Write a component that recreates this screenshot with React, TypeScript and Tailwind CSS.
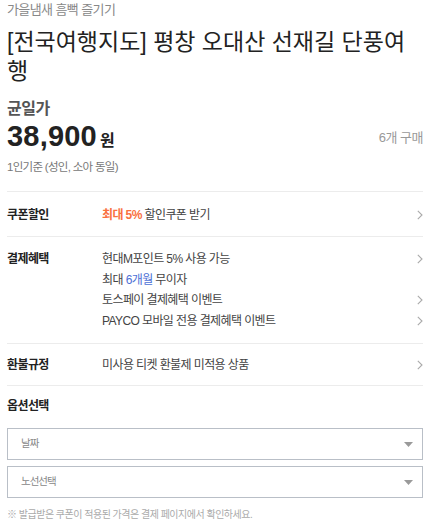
import React from "react";

const font = { fontFamily: '"Liberation Sans", "Noto Sans CJK KR", sans-serif' };

function Chevron() {
  return (
    <svg width="6" height="10" viewBox="0 0 6 10" className="shrink-0">
      <path d="M0.8 0.8 L5 5 L0.8 9.2" fill="none" stroke="#aaaaaa" strokeWidth="1.1" />
    </svg>
  );
}

function Caret() {
  return (
    <svg width="9" height="5" viewBox="0 0 9 5">
      <path d="M0 0 H9 L4.5 5 Z" fill="#9a9a9a" />
    </svg>
  );
}

function Select({ label }: { label: string }) {
  return (
    <div className="flex h-[32px] items-center justify-between border border-[#b9bfc7] pl-[13px] pr-[9px]">
      <span className="text-[10.5px] tracking-[-1px] text-[#888]">{label}</span>
      <Caret />
    </div>
  );
}

export default function App() {
  return (
    <div style={font} className="w-[437px] bg-white pl-[7px] pr-[14px] text-[#222]">
      <div className="pt-[1px] text-[13px] leading-[18px] tracking-[-0.6px] text-[#888]">가을냄새 흠뻑 즐기기</div>
      <h1 className="mt-[9px] text-[23px] leading-[29px] text-[#222]">
        [전국여행지도] 평창 오대산 선재길 단풍여행
      </h1>
      <div className="mt-[12px] text-[16px] font-bold leading-[22px] tracking-[-0.5px] text-[#555]">균일가</div>
      <div className="flex items-center justify-between">
        <div className="flex items-baseline leading-[32px]">
          <span className="text-[29px] font-bold tracking-[0.2px] text-[#222]">38,900</span>
          <span className="ml-[3px] text-[16px] font-bold text-[#222]">원</span>
        </div>
        <span className="mt-[-2px] text-[13px] tracking-[-0.5px] text-[#999]">6개 구매</span>
      </div>
      <div className="mt-[1px] text-[11.5px] leading-[18px] tracking-[-0.7px] text-[#777]">1인기준 (성인, 소아 동일)</div>

      <div className="mt-[15px] border-t border-[#ececec]" />

      <div className="flex items-center pt-[14px] pb-[12px] text-[12px] leading-[18px] tracking-[-0.6px]">
        <div className="w-[95px] font-bold text-[#222]">쿠폰할인</div>
        <div className="flex-1 text-[#444]">
          <span className="font-bold text-[#f9703e]">최대 5%</span> 할인쿠폰 받기
        </div>
        <Chevron />
      </div>

      <div className="border-t border-[#ececec]" />

      <div className="flex pt-[12px] pb-[12px] text-[12px] leading-[20.5px] tracking-[-0.6px]">
        <div className="w-[95px] font-bold text-[#222]">결제혜택</div>
        <div className="flex flex-1 flex-col text-[#444]">
          <div className="flex items-center justify-between">
            <span>현대M포인트 5% 사용 가능</span>
            <Chevron />
          </div>
          <div>
            최대 <span className="text-[#4d6fd6]">6개월</span> 무이자
          </div>
          <div className="flex items-center justify-between">
            <span>토스페이 결제혜택 이벤트</span>
            <Chevron />
          </div>
          <div className="flex items-center justify-between">
            <span>PAYCO 모바일 전용 결제혜택 이벤트</span>
            <Chevron />
          </div>
        </div>
      </div>

      <div className="border-t border-[#ececec]" />

      <div className="flex items-center pt-[12px] pb-[11px] text-[12px] leading-[18px] tracking-[-0.6px]">
        <div className="w-[95px] font-bold text-[#222]">환불규정</div>
        <div className="flex-1 text-[#444]">미사용 티켓 환불제 미적용 상품</div>
        <Chevron />
      </div>

      <div className="border-t border-[#ececec]" />

      <div className="pt-[11px] text-[12px] font-bold leading-[18px] tracking-[-0.6px] text-[#222]">옵션선택</div>

      <div className="mt-[13px] flex flex-col gap-[6px]">
        <Select label="날짜" />
        <Select label="노선선택" />
      </div>

      <div className="mt-[9px] pb-[10px] text-[10px] leading-[16px] tracking-[-0.5px] text-[#aaa]">
        ※ 발급받은 쿠폰이 적용된 가격은 결제 페이지에서 확인하세요.
      </div>
    </div>
  );
}
